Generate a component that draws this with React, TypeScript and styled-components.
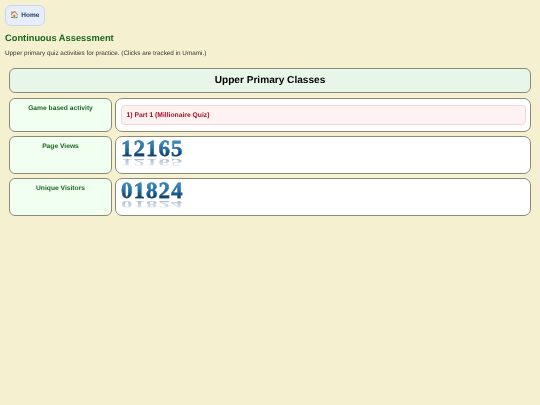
import styled, { createGlobalStyle } from 'styled-components';

const GlobalStyle = createGlobalStyle`
  html, body {
    margin: 0;
    padding: 0;
    background: #f5f1d0;
    font-family: "Liberation Sans", Arial, sans-serif;
    text-rendering: geometricPrecision;
  }
`;

const Page = styled.div`
  padding: 5px;
  height: 405px;
  box-sizing: border-box;
  overflow: hidden;
  will-change: transform;
`;

const HomeButton = styled.a`
  display: flex;
  align-items: center;
  gap: 2px;
  box-sizing: border-box;
  width: 40px;
  height: 21px;
  padding-left: 4.5px;
  background: #e6eefb;
  border: 1px solid #c9d6ee;
  border-radius: 6px;
  font-size: 6.5px;
  font-weight: 700;
  color: #1c3a63;
`;

const HomeIcon = styled.span`
  font-size: 7px;
  line-height: 1;
`;

const Title = styled.h1`
  margin: 6px 0 0;
  font-size: 9.3px;
  line-height: 12px;
  font-weight: 700;
  color: #1b6620;
`;

const Intro = styled.p`
  margin: 6px 0 0;
  font-size: 6.35px;
  line-height: 8px;
  color: #333333;
`;

const Board = styled.div`
  margin: 10px 4px 0;
  display: grid;
  grid-template-columns: 103px 1fr;
  grid-template-rows: 26px 34px 38px 38px;
  gap: 4px 3px;
`;

const Banner = styled.div`
  grid-column: 1 / 3;
  margin-bottom: 1px;
  display: flex;
  align-items: center;
  justify-content: center;
  background: #e8f5e9;
  border: 1px solid #8a8a78;
  border-radius: 6px;
  font-size: 10.1px;
  font-weight: 700;
  color: #000000;
`;

const LabelCell = styled.div`
  box-sizing: border-box;
  padding-top: 5px;
  background: #f0fff0;
  border: 1px solid #8a8a78;
  border-radius: 6px;
  text-align: center;
  font-size: 6.7px;
  line-height: 9px;
  font-weight: 700;
  color: #1b6620;
`;

const ValueCell = styled.div<{ $counter?: boolean }>`
  display: flex;
  flex-direction: column;
  justify-content: ${(p) => (p.$counter ? 'flex-start' : 'center')};
  box-sizing: border-box;
  padding: ${(p) => (p.$counter ? '2.7px 5px' : '0 4px 0 4.5px')};
  background: #ffffff;
  border: 1px solid #8a8a78;
  border-radius: 7px;
`;

const QuizLink = styled.a`
  display: flex;
  align-items: center;
  height: 20px;
  box-sizing: border-box;
  padding-left: 5px;
  background: #fff2f2;
  border: 1px solid #f1d6d8;
  border-radius: 4px;
  font-size: 6.75px;
  font-weight: 700;
  color: #a80f1e;
`;

const Digits = styled.div`
  font-family: "Liberation Serif", "Times New Roman", serif;
  font-size: 23px;
  font-weight: 700;
  line-height: 18px;
  height: 18px;
  letter-spacing: 1px;
  width: fit-content;
  background: linear-gradient(180deg, #3f8fc4 0%, #1f6fa6 50%, #0f3560 90%);
  -webkit-background-clip: text;
  background-clip: text;
  color: transparent;
  -webkit-text-stroke: 0.3px #1c5f94;
`;

const Reflection = styled(Digits)`
  margin-bottom: -10px;
  background: linear-gradient(0deg, #9fb2cc 0%, #dfe7f0 100%);
  -webkit-background-clip: text;
  background-clip: text;
  -webkit-text-stroke: 0;
  transform-origin: top;
  transform: translateY(7.8px) scaleY(-0.45);
`;

const Counter = ({ value }: { value: string }) => (
  <>
    <Digits>{value}</Digits>
    <Reflection aria-hidden>{value}</Reflection>
  </>
);

export default function App() {
  return (
    <Page>
      <GlobalStyle />
      <HomeButton>
        <HomeIcon>🏠</HomeIcon>
        Home
      </HomeButton>
      <Title>Continuous Assessment</Title>
      <Intro>Upper primary quiz activities for practice. (Clicks are tracked in Umami.)</Intro>
      <Board>
        <Banner>Upper Primary Classes</Banner>
        <LabelCell>Game based activity</LabelCell>
        <ValueCell>
          <QuizLink>1) Part 1 (Millionaire Quiz)</QuizLink>
        </ValueCell>
        <LabelCell>Page Views</LabelCell>
        <ValueCell $counter>
          <Counter value="12165" />
        </ValueCell>
        <LabelCell>Unique Visitors</LabelCell>
        <ValueCell $counter>
          <Counter value="01824" />
        </ValueCell>
      </Board>
    </Page>
  );
}
